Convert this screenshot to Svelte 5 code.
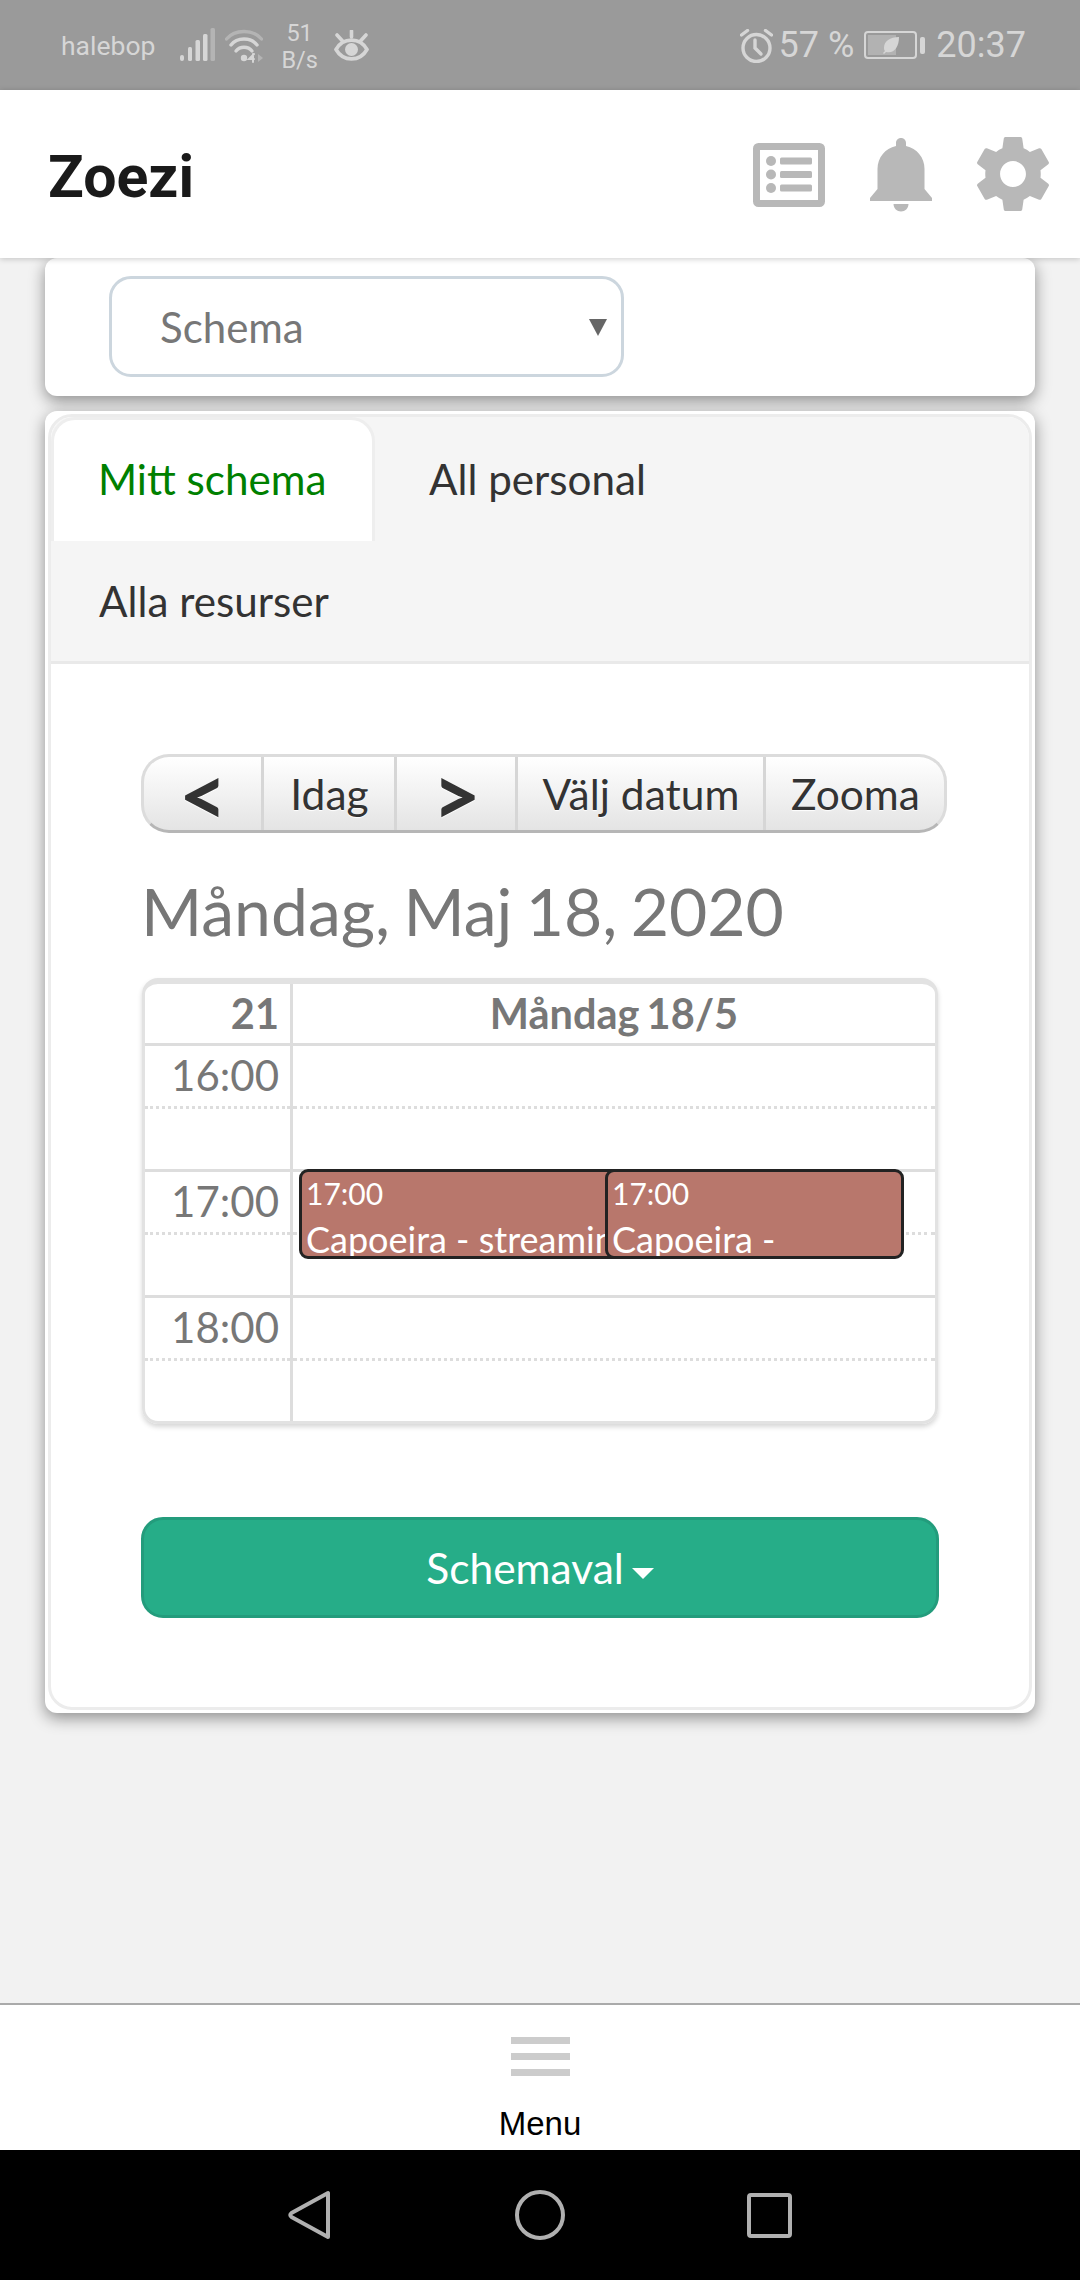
<script>
    const tools = [
        { label: '<', arrow: true, width: 120 },
        { label: 'Idag', width: 133 },
        { label: '>', arrow: true, width: 121 },
        { label: 'Välj datum', width: 248 },
        { label: 'Zooma', width: 178 }
    ];
    const hours = ['16:00', '17:00', '18:00'];
</script>

<div class="screen">
    <div class="statusbar">
        <div class="status-left">
            <span class="carrier">halebop</span>
            <!-- prettier-ignore -->
            <svg class="signal" width="35" height="33" viewBox="0 0 35 33" fill="#d6d6d6"><rect x="0" y="27" width="4" height="6" rx="2"/><rect x="8" y="19" width="4" height="14" rx="1.5"/><rect x="15.5" y="12" width="4.5" height="21" rx="1.5"/><rect x="23" y="6" width="4.5" height="27" rx="1.5"/><rect x="30.5" y="0" width="4.5" height="33" rx="1.5" fill="#b4b4b4"/></svg>
            <!-- prettier-ignore -->
            <svg class="wifi" width="38" height="34" viewBox="0 0 38 34" fill="none" stroke="#d6d6d6" stroke-width="3.4" stroke-linecap="round"><path d="M1.5 10 C10 0 28 0 36.5 10" stroke="#b4b4b4"/><path d="M6 16 C12 8 26 8 32 16"/><path d="M11 22 C15 17 23 17 27 22"/><circle cx="19" cy="29" r="3.2" fill="#d6d6d6" stroke="none"/><path d="M29 25 L24 30 L29 30 M28 25 L28 33" stroke-width="2"/><path d="M33 25 L38 29 L33 33 Z" fill="#b4b4b4" stroke="none"/></svg>
            <span class="speed"><span>51</span><span>B/s</span></span>
            <!-- prettier-ignore -->
            <svg class="eye" width="35" height="31" viewBox="0 0 35 31" fill="none" stroke="#d6d6d6" stroke-width="3.6" stroke-linecap="round"><path d="M2 19.500 C9 7 26 7 33 19.500 C26 32 9 32 2 19.500 Z"/><circle cx="17.500" cy="19.500" r="6.500" fill="#d6d6d6" stroke="none"/><path d="M17.500 1 V7 M3 5 L8.500 11 M32 5 L26.500 11"/></svg>
        </div>
        <div class="status-right">
            <!-- prettier-ignore -->
            <svg class="alarm" width="33" height="34" viewBox="0 0 33 34" fill="none" stroke="#d6d6d6" stroke-width="3.4" stroke-linecap="round"><circle cx="16.500" cy="19" r="13.500"/><path d="M15 11 V19 L21 25"/><path d="M1.500 6 L7.500 1.500 M31.500 6 L25.500 1.500"/></svg>
            <span class="battery-text">57 %</span>
            <div class="battery">
                <div class="battery-body">
                    <div class="battery-fill"></div>
                    <!-- prettier-ignore -->
                    <svg class="leaf" width="18" height="18" viewBox="0 0 18 18" fill="#d6d6d6"><path d="M17 1 C8 1 2 5 2 12 C2 13.5 2.500 14.500 3 15 L1 17 L2 18 L4 16 C12 18 17 11 17 1 Z"/></svg>
                </div>
                <div class="battery-nub"></div>
            </div>
            <span class="clock">20:37</span>
        </div>
    </div>

    <header class="topbar">
        <h1>Zoezi</h1>
        <div class="topbar-icons">
            <!-- prettier-ignore -->
            <svg class="icon-list" width="72" height="64" viewBox="0 0 72 64" fill="#b8b8b8"><rect x="3.500" y="3.500" width="65" height="57" rx="2" fill="none" stroke="#b8b8b8" stroke-width="7"/><circle cx="18" cy="18" r="5"/><circle cx="18" cy="31.500" r="5"/><circle cx="18" cy="45" r="5"/><rect x="27" y="14.500" width="32" height="7" rx="1.500"/><rect x="27" y="28" width="32" height="7" rx="1.500"/><rect x="27" y="41.500" width="32" height="7" rx="1.500"/></svg>
            <!-- prettier-ignore -->
            <svg class="icon-bell" width="62" height="74" viewBox="0 0 62 74" fill="#b8b8b8"><path d="M31 0 C34 0 36 2.300 36 5 L36 8 C47 10.500 54.500 19.500 54.500 31 L54.500 51 L62 60 L62 63 L0 63 L0 60 L7.500 51 L7.500 31 C7.500 19.500 15 10.500 26 8 L26 5 C26 2.300 28 0 31 0 Z"/><path d="M23.500 66 L38.500 66 C38.500 70.500 35 73.500 31 73.500 C27 73.500 23.500 70.500 23.500 66 Z"/></svg>
            <!-- prettier-ignore -->
            <svg width="74" height="74" viewBox="2 2 20 20" fill="#b8b8b8"><path d="M19.430 12.980c.04-.32.07-.64.07-.98s-.03-.66-.07-.98l2.110-1.650c.19-.15.24-.42.12-.64l-2-3.460c-.12-.22-.39-.3-.61-.22l-2.490 1c-.52-.4-1.080-.73-1.690-.98l-.38-2.650C14.460 2.180 14.250 2 14 2h-4c-.25 0-.46.18-.49.42l-.38 2.650c-.61.25-1.170.59-1.690.98l-2.490-1c-.23-.09-.49 0-.61.22l-2 3.460c-.13.22-.07.49.12.64l2.110 1.650c-.04.32-.07.65-.07.98s.03.66.07.98l-2.110 1.650c-.19.15-.24.42-.12.64l2 3.460c.12.22.39.3.61.22l2.490-1c.52.4 1.080.73 1.690.98l.38 2.650c.03.24.24.42.49.42h4c.25 0 .46-.18.49-.42l.38-2.650c.61-.25 1.170-.59 1.690-.98l2.490 1c.23.09.49 0 .61-.22l2-3.460c.12-.22.07-.49-.12-.64l-2.110-1.650zM12 15.500c-1.930 0-3.500-1.570-3.500-3.500s1.570-3.500 3.500-3.500 3.500 1.570 3.500 3.500-1.570 3.500-3.500 3.500z"/></svg>
        </div>
    </header>

    <main class="content">
        <section class="card select-card">
            <div class="select">
                <span>Schema</span>
                <i class="select-arrow"></i>
            </div>
        </section>

        <section class="card main-card">
            <div class="panel">
                <nav class="tabs">
                    <div class="tab active">Mitt schema</div>
                    <div class="tab personal">All personal</div>
                    <div class="tab resources">Alla resurser</div>
                </nav>

                <div class="panel-body">
                    <div class="toolbar">
                        {#each tools as tool}
                            <button class:arrow={tool.arrow} style:width="{tool.width}px">{tool.label}</button>
                        {/each}
                    </div>

                    <h2>Måndag, Maj 18, 2020</h2>

                    <div class="calendar">
                        <div class="cal-head">
                            <div class="week">21</div>
                            <div class="day">Måndag 18/5</div>
                        </div>
                        {#each hours as hour}
                            <div class="hour">
                                <div class="hour-label">
                                    <div class="half">{hour}</div>
                                    <div class="half"></div>
                                </div>
                                <div class="hour-slots">
                                    <div class="half"></div>
                                    <div class="half"></div>
                                </div>
                            </div>
                        {/each}

                        <div class="event first">
                            <div class="event-time">17:00</div>
                            <div class="event-name">Capoeira - streaming</div>
                        </div>
                        <div class="event second">
                            <div class="event-time">17:00</div>
                            <div class="event-name">Capoeira - streaming</div>
                        </div>
                    </div>

                    <button class="schemaval">Schemaval <i class="caret"></i></button>
                </div>
            </div>
        </section>
    </main>

    <footer class="menubar">
        <div class="burger"><span></span><span></span><span></span></div>
        <div class="menu-label">Menu</div>
    </footer>

    <div class="navbar">
        <!-- prettier-ignore -->
        <svg width="42" height="50" viewBox="0 0 42 50" fill="none" stroke="#b0b0b0" stroke-width="4" stroke-linejoin="round"><path d="M40 3 V47 L3.500 27 Q1 25 3.500 23 Z"/></svg>
        <!-- prettier-ignore -->
        <svg width="50" height="50" viewBox="0 0 50 50" fill="none" stroke="#b0b0b0" stroke-width="4"><circle cx="25" cy="25" r="23"/></svg>
        <!-- prettier-ignore -->
        <svg class="nav-square" width="45" height="45" viewBox="0 0 45 45" fill="none" stroke="#b0b0b0" stroke-width="4"><rect x="2" y="2" width="41" height="41" rx="2"/></svg>
    </div>
</div>

<style>
    :global(body) {
        background: #f2f2f2;
    }

    .screen {
        display: flex;
        flex-direction: column;
        height: 2280px;
        overflow: hidden;
        font-family: Lato, sans-serif;
    }

    .statusbar {
        flex: none;
        display: flex;
        justify-content: space-between;
        align-items: center;
        height: 90px;
        padding: 0 54px 0 61px;
        background: #9a9a9a;
        color: #d6d6d6;
        font-family: Roboto, sans-serif;
    }

    .status-left,
    .status-right {
        display: flex;
        align-items: center;
    }

    .carrier {
        font-size: 26.500px;
        margin-right: 25px;
    }

    .signal {
        margin-right: 10px;
        margin-top: -1px;
    }

    .wifi {
        margin-right: 18px;
        margin-top: 1px;
    }

    .speed {
        display: flex;
        flex-direction: column;
        align-items: center;
        font-size: 23.500px;
        line-height: 27px;
        margin-right: 16px;
        margin-top: 4px;
    }

    .eye {
        margin-top: 1px;
    }

    .alarm {
        margin-right: 6px;
        margin-top: 1px;
    }

    .battery-text,
    .clock {
        font-size: 36px;
    }

    .battery {
        display: flex;
        align-items: center;
        gap: 3px;
        margin: 0 11px 0 10px;
    }

    .battery-body {
        position: relative;
        width: 53px;
        height: 28px;
        box-sizing: border-box;
        border: 2px solid #d6d6d6;
        border-radius: 4px;
        padding: 2px;
    }

    .battery-fill {
        width: 28px;
        height: 100%;
        background: #b2b2b2;
    }

    .leaf {
        position: absolute;
        left: 16px;
        top: 3px;
    }

    .battery-nub {
        width: 5px;
        height: 17px;
        border-radius: 2px;
        background: #d6d6d6;
    }

    .topbar {
        flex: none;
        position: relative;
        z-index: 2;
        display: flex;
        justify-content: space-between;
        align-items: center;
        height: 168px;
        padding: 0 30px 0 48px;
        background: #fff;
        box-shadow: 0 1px 6px rgba(0, 0, 0, 0.2);
    }

    h1 {
        margin: 4px 0 0;
        font-family: Roboto, sans-serif;
        font-size: 59px;
        font-weight: 700;
        color: #1a1a1a;
    }

    .topbar-icons {
        display: flex;
        align-items: center;
        gap: 44px;
    }

    .icon-list {
        margin: 1px 1px 0 0;
    }

    .icon-bell {
        margin-top: 1px;
    }

    .content {
        flex: 1;
        min-height: 0;
        padding: 0 45px;
    }

    .card {
        background: #fff;
        border-radius: 12px;
        box-shadow: 0 5px 16px rgba(0, 0, 0, 0.42);
    }

    .select-card {
        height: 138px;
        padding: 18px 64px 0;
        box-sizing: border-box;
    }

    .select {
        position: relative;
        display: flex;
        align-items: center;
        box-sizing: border-box;
        width: 515px;
        height: 101px;
        padding-left: 48px;
        border: 3px solid #ccd6de;
        border-radius: 22px;
        font-size: 42px;
        color: #777;
    }

    .select-arrow {
        position: absolute;
        right: 14px;
        top: 40px;
        border-left: 9px solid transparent;
        border-right: 9px solid transparent;
        border-top: 17px solid #666;
    }

    .main-card {
        margin-top: 15px;
        padding: 3px;
    }

    .panel {
        border: 3px solid #ececec;
        border-radius: 24px;
        overflow: hidden;
    }

    .tabs {
        display: flex;
        flex-wrap: wrap;
        align-content: flex-start;
        height: 244px;
        background: #f5f5f5;
        border-bottom: 3px solid #e9e9e9;
        font-size: 42.200px;
        color: #333;
    }

    .tab {
        box-sizing: border-box;
        height: 124px;
        line-height: 124px;
        white-space: nowrap;
    }

    .tab.active {
        width: 324px;
        padding-left: 44px;
        background: #fff;
        border: solid #eee;
        border-width: 3px 3px 0;
        border-radius: 24px 24px 0 0;
        color: #008000;
        line-height: 118px;
    }

    .tab.personal {
        margin-left: 54px;
    }

    .tab.resources {
        width: 100%;
        height: 120px;
        padding-left: 48px;
        line-height: 120px;
    }

    .panel-body {
        padding: 90px 90px 89px;
    }

    .toolbar {
        display: flex;
        width: 806px;
        height: 79px;
        box-sizing: border-box;
        border: 3px solid #dcdcdc;
        border-bottom-color: #b6b6b6;
        border-radius: 28px;
        background: linear-gradient(#fff, #e4e4e4);
    }

    .toolbar button {
        flex: none;
        height: 100%;
        padding: 0 0 0 1px;
        border: none;
        border-right: 3px solid #d6d6d6;
        background: none;
        font-family: Lato, sans-serif;
        font-size: 42.500px;
        color: #333;
        text-shadow: 0 1px 1px #fff;
    }

    .toolbar button:last-child {
        border-right: none;
    }

    .toolbar button.arrow {
        font-size: 84px;
        font-weight: 700;
        line-height: 60px;
    }

    h2 {
        margin: 39px 0 28px;
        font-size: 66px;
        font-weight: 400;
        line-height: 78px;
        word-spacing: -3.500px;
        color: #777;
        white-space: nowrap;
    }

    .calendar {
        position: relative;
        box-sizing: border-box;
        width: 796px;
        margin-left: 1px;
        border: 3px solid #e2e2e2;
        border-top-width: 6px;
        border-radius: 16px;
        box-shadow: 0 3px 5px rgba(0, 0, 0, 0.16);
        color: #777;
        overflow: hidden;
    }

    .cal-head {
        display: grid;
        grid-template-columns: 148px 1fr;
        height: 59px;
        border-bottom: 3px solid #ddd;
        font-size: 41.500px;
        font-weight: 700;
        line-height: 59px;
        word-spacing: -3px;
    }

    .week {
        padding-right: 11px;
        border-right: 3px solid #ddd;
        text-align: right;
    }

    .day {
        text-align: center;
    }

    .hour {
        display: grid;
        grid-template-columns: 148px 1fr;
        border-bottom: 3px solid #ddd;
    }

    .calendar .hour:nth-last-child(3) {
        border-bottom: none;
    }

    .hour-label {
        border-right: 3px solid #ddd;
        font-size: 42px;
        text-align: right;
    }

    .hour-label .half {
        padding-right: 11px;
    }

    .half {
        height: 60px;
        line-height: 58px;
    }

    .half:first-child {
        border-bottom: 3px dotted #ddd;
    }

    .event {
        position: absolute;
        top: 185px;
        box-sizing: border-box;
        height: 90px;
        padding: 0 4px;
        border: 3px solid #222;
        border-radius: 9px;
        background: #b8776c;
        color: #fff;
        overflow: hidden;
    }

    .event.first {
        left: 154px;
        width: 420px;
    }

    .event.second {
        left: 460px;
        width: 299px;
    }

    .event-time {
        font-size: 30px;
        line-height: 42px;
    }

    .event-name {
        font-size: 36px;
        line-height: 51px;
    }

    .schemaval {
        display: block;
        box-sizing: border-box;
        width: 798px;
        height: 101px;
        margin-top: 93px;
        padding: 0;
        border: 3px solid #239c7c;
        border-radius: 22px;
        background: #26ad88;
        font-family: Lato, sans-serif;
        font-size: 42.500px;
        color: #fff;
    }

    .caret {
        display: inline-block;
        margin-left: -3px;
        vertical-align: middle;
        border-left: 11px solid transparent;
        border-right: 11px solid transparent;
        border-top: 11px solid #fff;
    }

    .menubar {
        flex: none;
        display: flex;
        flex-direction: column;
        align-items: center;
        box-sizing: border-box;
        height: 147px;
        padding-top: 32px;
        background: #fff;
        border-top: 2px solid #aaa;
    }

    .burger {
        display: flex;
        flex-direction: column;
        gap: 9px;
        width: 59px;
    }

    .burger span {
        height: 7px;
        background: #ccc;
    }

    .menu-label {
        margin-top: 29px;
        font-family: 'Liberation Sans', sans-serif;
        font-size: 33px;
        color: #000;
    }

    .navbar {
        flex: none;
        display: flex;
        justify-content: center;
        align-items: center;
        gap: 185px;
        height: 130px;
        background: #000;
    }

    .nav-square {
        margin-left: -3px;
    }
</style>
